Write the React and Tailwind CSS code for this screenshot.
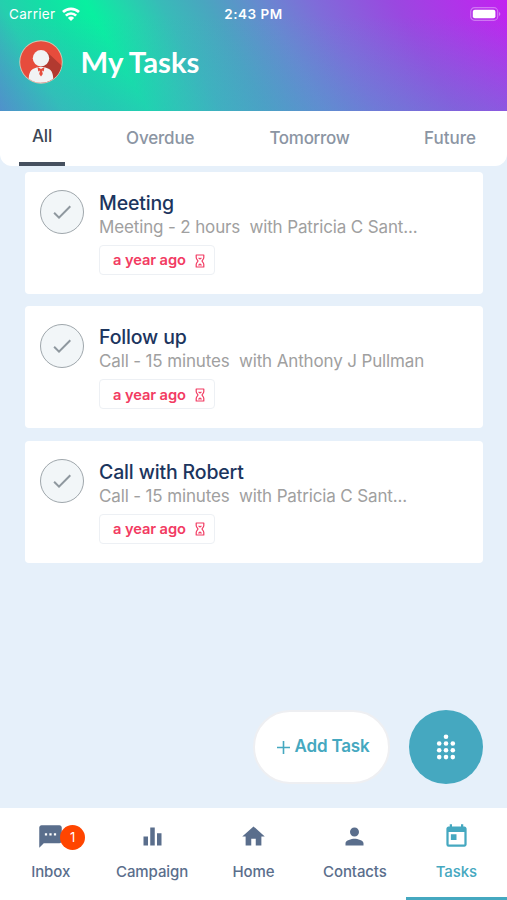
import { MdCheck, MdEqualizer, MdHome, MdPerson, MdTextsms, MdToday } from "react-icons/md";
import clsx from "clsx";

const TASKS = [
  { id: 1, title: "Meeting", detail: "Meeting - 2 hours", contact: "with Patricia C Sant...", due: "a year ago" },
  { id: 2, title: "Follow up", detail: "Call - 15 minutes", contact: "with Anthony J Pullman", due: "a year ago" },
  { id: 3, title: "Call with Robert", detail: "Call - 15 minutes", contact: "with Patricia C Sant...", due: "a year ago" },
];

const NAV_ITEMS = [
  { label: "Inbox", icon: MdTextsms, badge: 1 },
  { label: "Campaign", icon: MdEqualizer },
  { label: "Home", icon: MdHome },
  { label: "Contacts", icon: MdPerson },
  { label: "Tasks", icon: MdToday, active: true },
];

function WifiIcon() {
  return (
    <svg width="18" height="14" viewBox="0 0 18 14" fill="none" stroke="white" strokeWidth="2.7">
      <path d="M1 5a11.600 11.600 0 0 1 16 0" />
      <path d="M3.900 8.600a7.200 7.200 0 0 1 10.200 0" />
      <path d="M9 14 5.900 10.900a4.300 4.300 0 0 1 6.200 0Z" fill="white" stroke="none" />
    </svg>
  );
}

function BatteryIcon() {
  return (
    <svg width="31" height="14" viewBox="0 0 31 14">
      <rect x="0.7" y="0.7" width="27" height="12.6" rx="3.8" fill="none" stroke="white" strokeOpacity="0.35" strokeWidth="1.2" />
      <rect x="2.8" y="2.8" width="22.6" height="8.4" rx="2" fill="white" />
      <path d="M29 5v4c1.800-.6 1.800-3.400 0-4Z" fill="white" fillOpacity="0.4" />
    </svg>
  );
}

function Avatar() {
  return (
    <svg width="44" height="44" viewBox="0 0 44 44">
      <defs>
        <clipPath id="avatar-clip">
          <circle cx="22" cy="22" r="20.8" />
        </clipPath>
      </defs>
      <circle cx="22" cy="22" r="21.7" fill="#d9c8b4" />
      <g clipPath="url(#avatar-clip)">
        <rect width="44" height="44" fill="#e64c3c" />
        <path d="M28 12 44 27v17H22V26Z" fill="#b23a30" />
        <path d="M9.500 44c0-9 1-14 5.500-15.500l4-1.500h6l4 1.500c4.500 1.500 5.500 6.500 5.500 15.500Z" fill="#f1f3f4" />
        <path d="m18.500 27 3.500 2 3.500-2-.8 4.500-1.700-1 .8 3.500-1.800 2.500-1.800-2.500.8-3.500-1.700 1Z" fill="#e64c3c" />
        <circle cx="22" cy="18.300" r="8.200" fill="#f1f3f4" />
      </g>
    </svg>
  );
}

function HourglassIcon() {
  return (
    <svg width="10" height="14" viewBox="0 0 10 14" fill="none" stroke="#f23b62" strokeWidth="1.2" strokeLinejoin="round">
      <path d="M1.200 1h7.600v2.500c0 1.700-1.200 2.300-1.800 3.500.6 1.200 1.800 1.800 1.800 3.500V13H1.200v-2.500c0-1.700 1.200-2.300 1.800-3.500-.6-1.200-1.800-1.800-1.800-3.500Z" />
      <path d="M3.200 4h3.600L5 5.600ZM3 11.200l2-1.700 2 1.700Z" fill="#f23b62" strokeWidth="0.3" />
    </svg>
  );
}

function DialpadIcon() {
  return (
    <svg width="20" height="26" viewBox="0 0 20 26" fill="white">
      <circle cx="10" cy="2.800" r="2.300" />
      {[9.5, 16.3, 23.1].map((y) =>
        [3.2, 10, 16.8].map((x) => <circle key={`${x}-${y}`} cx={x} cy={y} r="2.300" />)
      )}
    </svg>
  );
}

function Header() {
  return (
    <header className="h-[110.500px] shrink-0 bg-[linear-gradient(180deg,rgba(80,150,210,0)_15%,rgba(80,150,210,0.34)_100%),linear-gradient(60deg,#508fc8_0%,#25cfae_11%,#12e0a5_19%,#08f0a0_26%,#20d8ab_32%,#38bbb8_39%,#4aa5c0_47%,#6888d0_57%,#7f6cd9_66%,#9a48e0_80%,#c322f1_100%)] text-white">
      <div className="grid h-[28px] grid-cols-3 items-center pl-[9px] pr-[6px] text-[13.500px]">
        <div className="flex items-center gap-[7px]">
          <span className="tracking-[0.300px]">Carrier</span>
          <WifiIcon />
        </div>
        <span className="pr-[3px] text-center font-semibold tracking-[0.5px]">2:43 PM</span>
        <div className="flex justify-end">
          <BatteryIcon />
        </div>
      </div>
      <div className="flex items-center gap-[17.500px] pl-[19px] pt-[12px]">
        <Avatar />
        <h1 className="font-[Lato,sans-serif] text-[29.300px] font-bold leading-[44px]">My Tasks</h1>
      </div>
    </header>
  );
}

function Tabs() {
  return (
    <nav className="flex h-[55.500px] shrink-0 items-start rounded-b-[12px] bg-white pl-[19px] text-[17px] font-medium tracking-[-0.150px] text-[#8b95a3]">
      <button className="h-full w-[46px] border-b-[4px] border-[#46505f] pt-px text-[#3d4654]">All</button>
      <button className="ml-[61px] h-[56px]">Overdue</button>
      <button className="ml-[75px] h-[56px] tracking-[-0.300px]">Tomorrow</button>
      <button className="ml-auto mr-[31px] h-[56px] tracking-normal">Future</button>
    </nav>
  );
}

function TaskCard({ task }) {
  return (
    <li className="flex h-[122px] gap-[15px] rounded-[4px] bg-white pl-[15px] pt-[18px]">
      <div className="flex size-[44px] shrink-0 items-center justify-center rounded-full border border-[#9fa7ac] bg-[#f2f6f8]">
        <MdCheck className="size-[24px] text-[#8f989f]" />
      </div>
      <div>
        <h2 className="text-[19.500px] font-medium leading-[26px] tracking-[-0.150px] text-[#1c355e]">{task.title}</h2>
        <p className="whitespace-pre text-[17px] leading-[23px] tracking-[-0.140px] text-[#a0a0a0]">
          {task.detail}
          {"  "}
          {task.contact}
        </p>
        <div className="mt-[6px] flex h-[30px] w-[116px] items-center justify-between rounded-[4px] border-[1.500px] border-[#edf0f4] pl-[13px] pr-[9px] pt-px text-[14.700px] font-semibold tracking-[-0.100px] text-[#f23b62]">
          {task.due}
          <HourglassIcon />
        </div>
      </div>
    </li>
  );
}

function BottomNav() {
  return (
    <nav className="grid h-[92px] shrink-0 grid-cols-5 bg-white">
      {NAV_ITEMS.map(({ label, icon: Icon, badge, active }) => (
        <button
          key={label}
          className={clsx(
            "flex flex-col items-center border-b-[3px] pt-[15px] text-[15px] font-medium tracking-[-0.100px]",
            active ? "border-[#45a8c0] text-[#45a8c0]" : "border-transparent text-[#5a6e8c]"
          )}
        >
          <span className="relative">
            <Icon className="size-[27px]" />
            {badge && (
              <span className="absolute left-[23px] top-[2px] flex size-[25px] items-center justify-center rounded-full bg-[#ff4500] text-[13px] font-normal text-white">
                {badge}
              </span>
            )}
          </span>
          <span className="mt-[11px] leading-[22px]">{label}</span>
        </button>
      ))}
    </nav>
  );
}

export default function App() {
  return (
    <div className="flex h-[900px] w-[507px] flex-col overflow-hidden bg-[#e6f0fa] font-[Inter,sans-serif]">
      <Header />
      <Tabs />
      <main className="flex flex-1 flex-col justify-between pb-[24px] pl-[25px] pr-[24px] pt-[6px]">
        <ul className="flex flex-col gap-[12.300px]">
          {TASKS.map((task) => (
            <TaskCard key={task.id} task={task} />
          ))}
        </ul>
        <div className="flex items-center justify-end gap-[19px]">
          <button className="flex h-[74px] w-[137px] items-center justify-center gap-[5px] rounded-full border-2 border-[#eeeff2] bg-white pl-[3px] text-[17px] font-semibold tracking-[-0.200px] text-[#45a8c0]">
            <svg width="13" height="13" viewBox="0 0 13 13" stroke="currentColor" strokeWidth="1.600">
              <path d="M6.500 0v13M0 6.500h13" />
            </svg>
            Add Task
          </button>
          <button className="flex size-[74px] items-center justify-center rounded-full bg-[#45a8c0]">
            <DialpadIcon />
          </button>
        </div>
      </main>
      <BottomNav />
    </div>
  );
}
